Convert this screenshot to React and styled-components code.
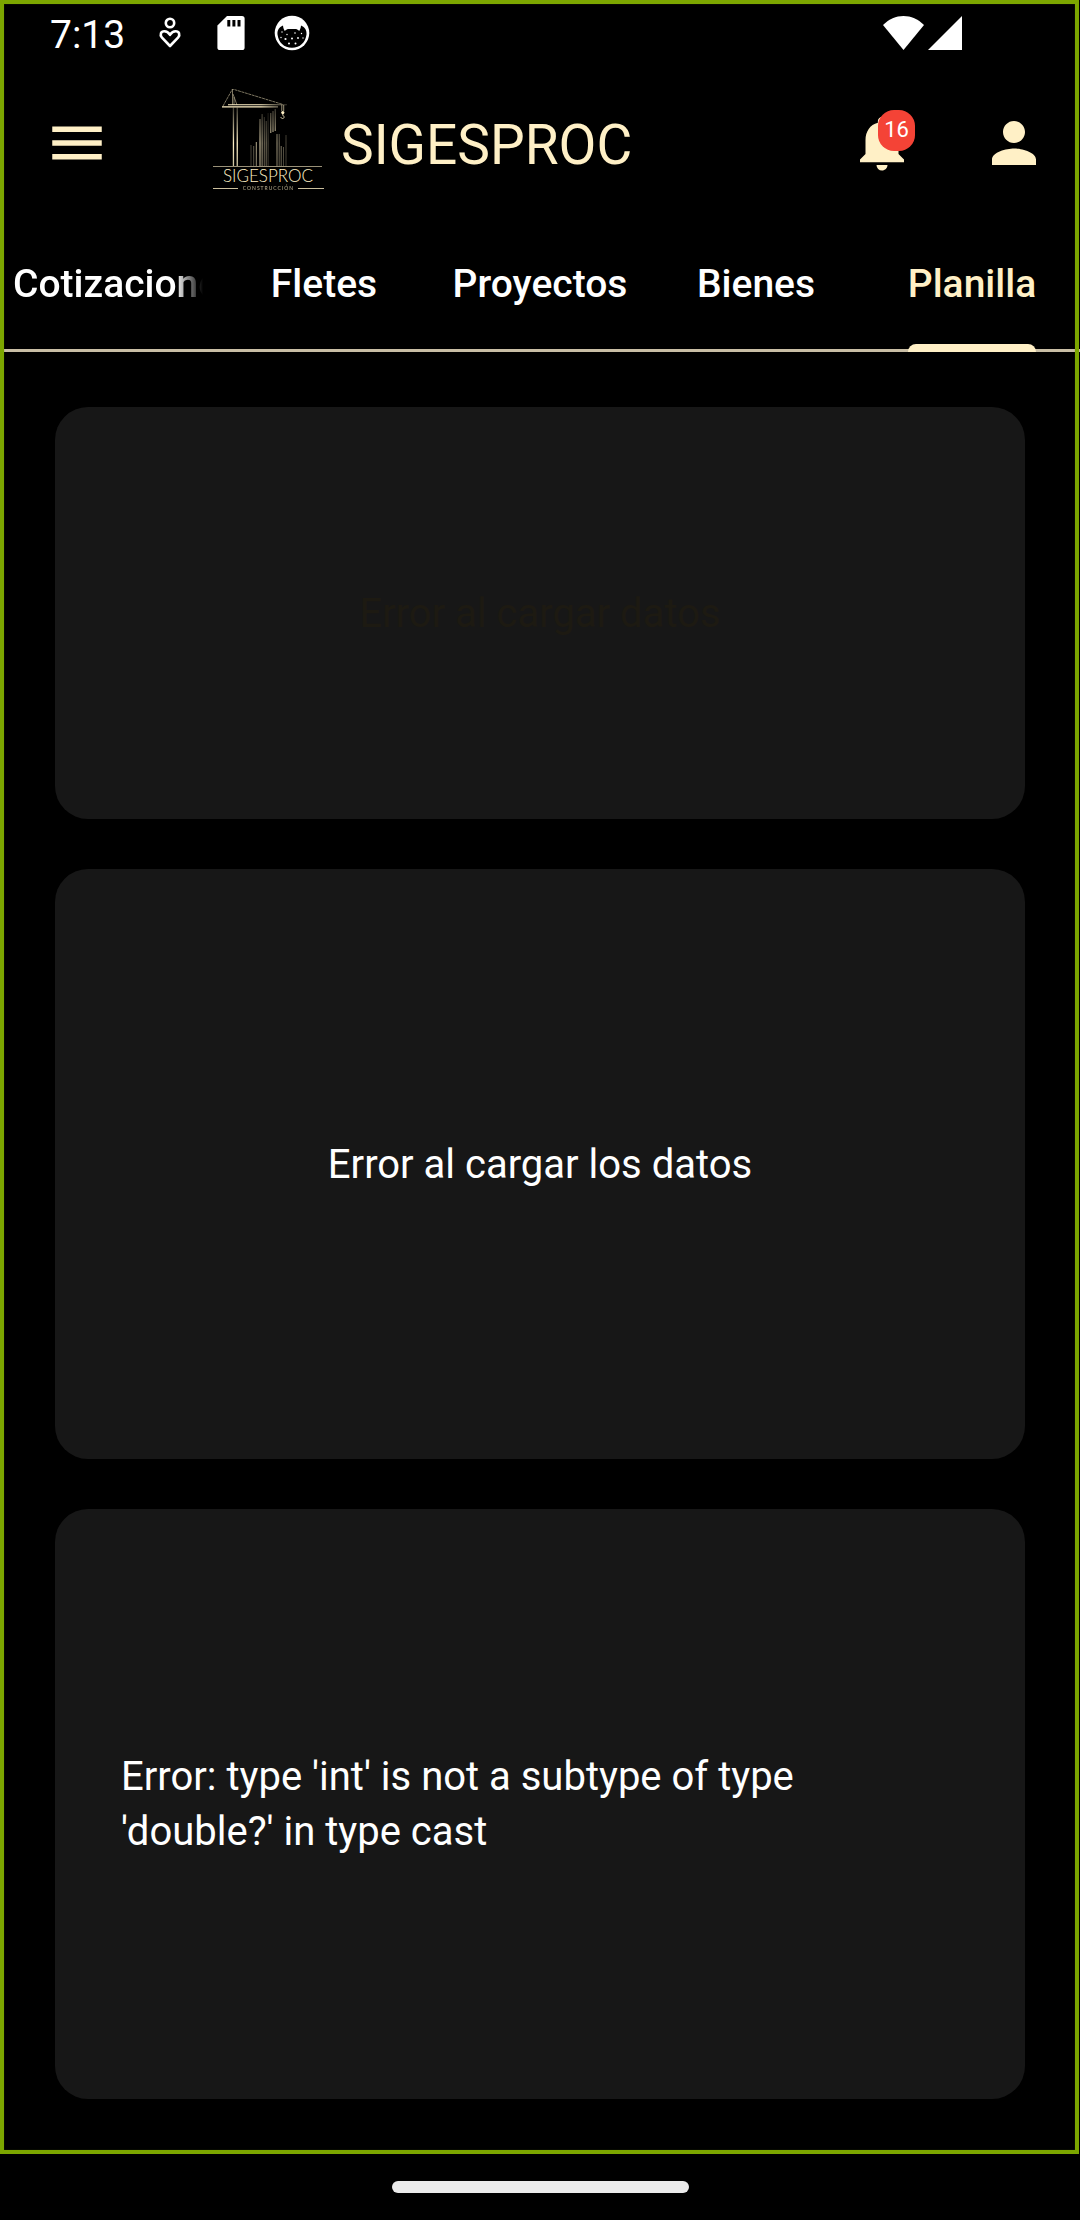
import React from "react";
import styled, { createGlobalStyle, css } from "styled-components";
import { MdMenu, MdNotifications, MdPerson } from "react-icons/md";

const cream = "#fff0c6";

const GlobalStyle = createGlobalStyle`
  * { box-sizing: border-box; }
  body { margin: 0; background: #000; }
`;

const Device = styled.div`
  min-height: 100vh;
  display: flex;
  flex-direction: column;
  background: #000;
  color: #fff;
  font-family: Roboto, "Noto Sans", sans-serif;
`;

const Screen = styled.div`
  position: relative;
  flex: 1;
  display: flex;
  flex-direction: column;
`;

const FocusFrame = styled.div`
  position: absolute;
  inset: 0 1px 0 0;
  border: 4px solid #7ca600;
  box-shadow: inset 0 0 1px #4a6300;
  pointer-events: none;
`;

const StatusBar = styled.div`
  height: 66px;
  padding: 0 118px 0 50px;
  display: flex;
  justify-content: space-between;
`;

const StatusGroup = styled.div`
  height: 66px;
  display: flex;
  align-items: center;
  gap: ${(p) => p.$gap}px;
`;

const StatusSlot = styled.span`
  width: 61px;
  display: flex;
  justify-content: center;
`;

const Clock = styled.time`
  font-size: 39px;
  line-height: 66px;
  padding-top: 3px;
  margin-right: 14px;
`;

const AppBar = styled.header`
  height: 154px;
  padding: 0 33px 0 44px;
  display: flex;
  align-items: center;
`;

const IconButton = styled.button`
  position: relative;
  width: 66px;
  height: 66px;
  padding: 0;
  border: 0;
  background: none;
  color: ${cream};
  cursor: pointer;
  svg { display: block; width: 66px; height: 66px; }
`;

const Brand = styled.div`
  flex: 1;
  margin-left: 103px;
  display: flex;
  align-items: center;
  gap: 16px;
`;

const Title = styled.h1`
  margin: 0;
  padding-top: 3px;
  color: ${cream};
  font-size: 55px;
  line-height: 66px;
  font-weight: 400;
`;

const Actions = styled.div`
  display: flex;
  gap: 66px;
`;

const Badge = styled.span`
  position: absolute;
  top: 0;
  right: 0;
  width: 37px;
  height: 41px;
  border-radius: 16px;
  background: #f44336;
  color: #fff;
  font: 400 22px/40px Roboto, sans-serif;
  text-align: center;
`;

const Tabs = styled.nav`
  display: grid;
  grid-template-columns: repeat(5, 1fr);
  height: 132px;
  border-bottom: 3px solid #c9bea5;
`;

const Tab = styled.button`
  display: flex;
  flex-direction: column;
  align-items: center;
  justify-content: space-between;
  height: 132px;
  min-width: 0;
  padding: 0 13px;
  border: 0;
  background: none;
  color: ${(p) => (p.$active ? cream : "#fff")};
  font: 500 39px/55px Roboto, sans-serif;
  cursor: pointer;
`;

const TabLabel = styled.span`
  display: flex;
  flex-direction: column;
  justify-content: space-between;
  height: 132px;
  padding-top: 37px;
  max-width: 100%;
  overflow: hidden;
  white-space: nowrap;
  ${(p) =>
    p.$fade &&
    css`
      mask-image: linear-gradient(to right, #000 calc(100% - 28px), transparent);
    `}
  &::after {
    content: "";
    height: 8px;
    border-radius: 8px 8px 0 0;
    background: ${(p) => (p.$active ? cream : "transparent")};
  }
`;

const Content = styled.main`
  flex: 1;
  padding: 55px;
  display: flex;
  flex-direction: column;
  gap: 50px;
`;

const Card = styled.section`
  min-height: ${(p) => (p.$compact ? 412 : 590)}px;
  padding: 66px;
  display: flex;
  align-items: center;
  justify-content: center;
  border-radius: 33px;
  background: #171717;
  ${(p) =>
    p.$start &&
    css`
      justify-content: flex-start;
      padding-right: 88px;
    `}
`;

const Message = styled.p`
  margin: 0;
  color: ${(p) => (p.$dim ? "#1d1a12" : "#fff")};
  font-size: 40px;
  line-height: 55px;
`;

const NavBar = styled.footer`
  height: 66px;
  display: flex;
  align-items: center;
  justify-content: center;
`;

const HomeHandle = styled.button`
  width: 297px;
  height: 12px;
  padding: 0;
  border: 0;
  border-radius: 6px;
  background: #ebebeb;
`;

function HeartPersonIcon() {
  return (
    <svg width="24" height="32" viewBox="0 0 24 32" fill="none" stroke="#fff" strokeWidth="2.6">
      <circle cx="12" cy="6" r="4.2" />
      <path d="M12 29 4 20.600C1.400 17.600 3 14.200 6.400 14.200c2.500 0 4.200 1.500 5.600 3.600 1.400-2.100 3.100-3.600 5.600-3.600 3.400 0 5 3.400 2.400 6.400Z" strokeLinejoin="round" />
    </svg>
  );
}

function SdCardIcon() {
  return (
    <svg width="28" height="34" viewBox="0 0 28 34">
      <path fill="#fff" d="M10 0h15a2.600 2.600 0 0 1 2.600 2.600v28.800A2.600 2.600 0 0 1 25 34H3a2.600 2.600 0 0 1-2.600-2.600V9.600Z" />
      <path d="M10.300 4h3v6.600h-3zM15.400 4h3v6.600h-3zM20.500 4h3v6.600h-3z" />
    </svg>
  );
}

function CatIcon() {
  return (
    <svg width="36" height="36" viewBox="0 0 36 36">
      <circle cx="18" cy="18" r="17.300" fill="#fff" />
      <path d="M9 10.500C5 12.500 3.200 15 3.500 19.500 4.500 27.500 10 32.700 18 32.700s13.500-5.200 14.500-13.200c.3-4.500-1.500-7-5.500-9-.2 2.400-.8 4-1.800 5.500-1.500-1.500-2.600-2-4.200-2h-6c-1.600 0-2.700.5-4.200 2-1-1.500-1.600-3.100-1.800-5.500Z" />
      <g fill="#fff">
        <circle cx="8" cy="17" r=".7" />
        <circle cx="13" cy="19.500" r=".7" />
        <circle cx="21" cy="18" r=".8" />
        <circle cx="27.500" cy="18.500" r=".7" />
        <circle cx="7" cy="22.500" r=".7" />
        <circle cx="11.500" cy="24" r="1.100" />
        <circle cx="18" cy="23.500" r="1" />
        <circle cx="24" cy="23" r=".9" />
        <circle cx="29" cy="23" r=".7" />
        <circle cx="15" cy="28.500" r="1" />
        <circle cx="21.500" cy="28.500" r="1" />
      </g>
    </svg>
  );
}

function WifiIcon() {
  return (
    <svg width="41" height="34" viewBox="0 0 41 34">
      <path fill="#fff" d="M0 9C6 3 13 0 20.500 0S35 3 41 9L20.500 34Z" />
    </svg>
  );
}

function SignalIcon() {
  return (
    <svg width="34" height="34" viewBox="0 0 34 34">
      <path fill="#fff" d="M34 0v34H0Z" />
    </svg>
  );
}

const buildingLines = [
  [37.500, 56, 77, 0.3],
  [40.200, 57, 77, 0.4],
  [42.800, 53, 77, 0.7],
  [46.500, 30, 77, 0.95],
  [48.600, 25, 77, 0.7],
  [50.800, 28, 77, 0.45],
  [52.700, 32, 77, 0.5],
  [54.600, 24, 77, 0.3],
  [57.300, 24, 44, 1],
  [59.500, 22, 43, 1],
  [61.700, 20, 42, 1],
  [63.500, 45, 77, 0.65],
  [65.700, 45, 77, 0.45],
  [67.700, 57, 77, 0.5],
  [70, 58, 77, 0.35],
  [72.500, 46, 77, 0.3],
];

function Logo() {
  return (
    <svg width="112" height="108" viewBox="0 0 112 108" role="img" aria-label="SIGESPROC Construcción">
      <defs>
        <linearGradient id="shade" x1="0" y1="20" x2="0" y2="77" gradientUnits="userSpaceOnUse">
          <stop offset="0" stopColor={cream} stopOpacity=".3" />
          <stop offset=".6" stopColor={cream} />
          <stop offset="1" stopColor={cream} stopOpacity=".8" />
        </linearGradient>
        <linearGradient id="boom" x1="9" y1="0" x2="74" y2="0" gradientUnits="userSpaceOnUse">
          <stop offset=".6" stopColor={cream} />
          <stop offset="1" stopColor={cream} stopOpacity=".2" />
        </linearGradient>
      </defs>
      <g fill="none" stroke={cream} strokeWidth=".7" opacity=".7">
        <path d="M10 17 19.500 0 70 15.500" strokeDasharray="3 .6" />
        <path d="M19.500 0v16M20 5l4 11M21 8v8" />
      </g>
      <path fill="url(#boom)" d="M15 15.200h59v1H15zM9 17.300h56v1.300H9z" />
      <path fill="url(#shade)" d="M19.800 18.500h1.300V77h-1.300zM23.600 18.500h1.300V77h-1.300z" />
      {buildingLines.map(([x, top, bottom, opacity]) => (
        <rect key={x} x={x} y={top} width="1" height={bottom - top} fill="url(#shade)" opacity={opacity} />
      ))}
      <g stroke={cream} fill="none">
        <path d="M68.800 16v6M70.700 16v6" strokeWidth=".6" />
        <circle cx="69.800" cy="23.600" r="1.600" fill={cream} stroke="none" />
        <path d="M69.800 25v1.500c2 .5 1.600 3-.2 3-1 0-1.700-.6-1.700-1.500" strokeWidth=".8" />
      </g>
      <path fill={cream} opacity=".8" d="M0 76.900h109v.9H0zM0 98.900h25v1H0zM85 98.900h26v1H85z" />
      <text x="55" y="93" textAnchor="middle" fill={cream} fontFamily="Lato, sans-serif" fontWeight="300" fontSize="17">SIGESPROC</text>
      <text x="55.500" y="101" textAnchor="middle" fill={cream} opacity=".7" fontFamily="Lato, sans-serif" fontSize="5" letterSpacing="1">CONSTRUCCIÓN</text>
    </svg>
  );
}

const tabs = ["Cotizaciones", "Fletes", "Proyectos", "Bienes", "Planilla"];

export default function App() {
  const [active, setActive] = React.useState("Planilla");
  return (
    <Device>
      <GlobalStyle />
      <Screen>
        <StatusBar>
          <StatusGroup $gap={0}>
            <Clock>7:13</Clock>
            <StatusSlot><HeartPersonIcon /></StatusSlot>
            <StatusSlot><SdCardIcon /></StatusSlot>
            <StatusSlot><CatIcon /></StatusSlot>
          </StatusGroup>
          <StatusGroup $gap={4}>
            <WifiIcon />
            <SignalIcon />
          </StatusGroup>
        </StatusBar>
        <AppBar>
          <IconButton aria-label="Menú">
            <MdMenu />
          </IconButton>
          <Brand>
            <Logo />
            <Title>SIGESPROC</Title>
          </Brand>
          <Actions>
            <IconButton aria-label="Notificaciones">
              <MdNotifications />
              <Badge>16</Badge>
            </IconButton>
            <IconButton aria-label="Perfil">
              <MdPerson />
            </IconButton>
          </Actions>
        </AppBar>
        <Tabs>
          {tabs.map((name) => (
            <Tab key={name} $active={name === active} onClick={() => setActive(name)}>
              <TabLabel $active={name === active} $fade={name.length > 10}>
                {name}
              </TabLabel>
            </Tab>
          ))}
        </Tabs>
        <Content>
          <Card $compact>
            <Message $dim>Error al cargar datos</Message>
          </Card>
          <Card>
            <Message>Error al cargar los datos</Message>
          </Card>
          <Card $start>
            <Message>Error: type 'int' is not a subtype of type 'double?' in type cast</Message>
          </Card>
        </Content>
        <FocusFrame />
      </Screen>
      <NavBar>
        <HomeHandle aria-label="Inicio" />
      </NavBar>
    </Device>
  );
}
